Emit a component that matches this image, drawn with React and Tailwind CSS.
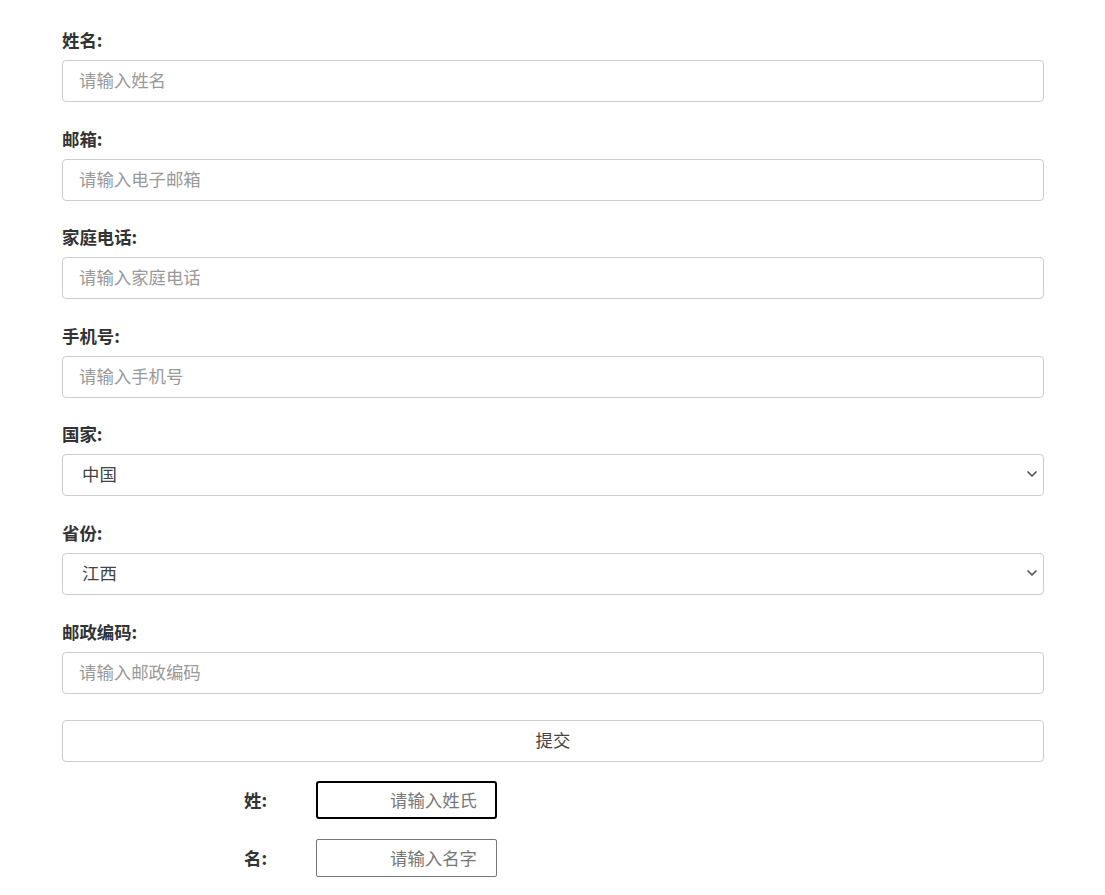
import { ChevronDown } from 'lucide-react';

const fields = [
  { label: '姓名:', placeholder: '请输入姓名' },
  { label: '邮箱:', placeholder: '请输入电子邮箱' },
  { label: '家庭电话:', placeholder: '请输入家庭电话' },
  { label: '手机号:', placeholder: '请输入手机号' },
  { label: '国家:', select: ['中国', '美国', '日本'] },
  { label: '省份:', select: ['江西', '北京', '上海'] },
  { label: '邮政编码:', placeholder: '请输入邮政编码' },
];

export default function App() {
  return (
    <div className="min-h-screen bg-white pt-[30px] pl-[62px] text-[17.4px] text-[#333] font-['Noto_Sans_CJK_SC','Noto_Sans',sans-serif]">
      <form className="w-[982px]">
        {fields.map((f) => (
          <div key={f.label} className="mb-[26.6px]">
            <label className="mb-[6px] block h-[24px] font-bold leading-[20px]">{f.label}</label>
            {f.select ? (
              <div className="relative">
                <select className="h-[42px] w-full appearance-none rounded-[4px] border border-[#ccc] bg-white pb-[2px] pl-[19px] text-[17.4px] text-[#444] outline-none">
                  {f.select.map((o) => (
                    <option key={o}>{o}</option>
                  ))}
                </select>
                <ChevronDown
                  size={16}
                  strokeWidth={2.6}
                  className="pointer-events-none absolute right-[4px] top-[12px] text-[#555]"
                />
              </div>
            ) : (
              <input
                placeholder={f.placeholder}
                className="h-[42px] w-full rounded-[4px] border border-[#ccc] px-[16px] pb-[3px] text-[17.4px] outline-none placeholder:text-[#999]"
              />
            )}
          </div>
        ))}
        <button
          type="button"
          className="block h-[42px] w-full rounded-[4px] border border-[#ccc] bg-white pb-[2px] text-[17.4px] text-[#444]"
        >
          提交
        </button>
        <div className="mt-[19px] flex flex-col gap-[20px] pl-[182px]">
          <div className="flex items-center">
            <span className="w-[72px] font-bold">姓:</span>
            <input
              placeholder="请输入姓氏"
              className="h-[38px] w-[181px] rounded-[3px] border-2 border-black pb-[2px] pr-[18px] text-right text-[17.4px] outline-none placeholder:text-[#777]"
            />
          </div>
          <div className="flex items-center">
            <span className="w-[72px] font-bold">名:</span>
            <input
              placeholder="请输入名字"
              className="h-[38px] w-[181px] rounded-[2px] border border-[#767676] pb-[2px] pr-[19px] text-right text-[17.4px] outline-none placeholder:text-[#777]"
            />
          </div>
        </div>
      </form>
    </div>
  );
}
